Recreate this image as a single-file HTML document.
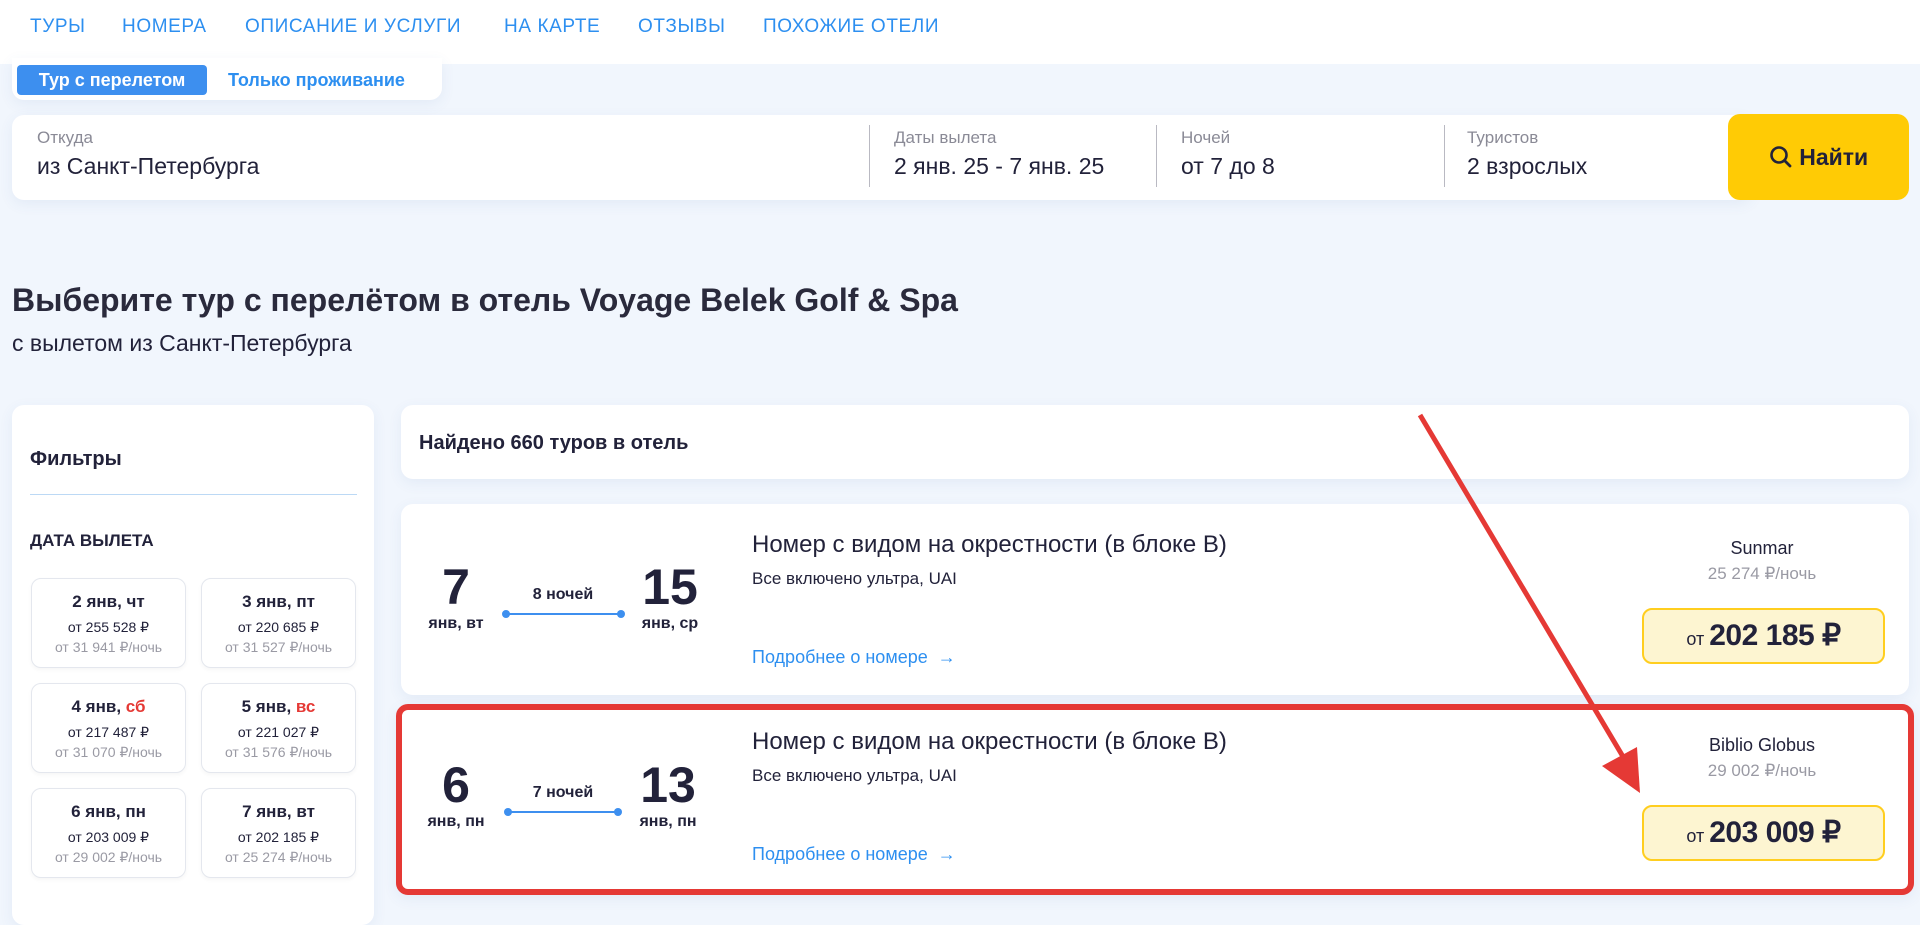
<!DOCTYPE html>
<html><head><meta charset="utf-8"><style>
*{box-sizing:border-box;margin:0;padding:0}
body{width:1920px;height:894px;overflow:hidden;background:#f1f6fd;font-family:"Liberation Sans",sans-serif;color:#22223a;position:relative}
.a{position:absolute;white-space:nowrap}
.hdr{position:absolute;left:0;top:0;width:1920px;height:64px;background:#fff}
.nav{top:16px;font-size:19px;color:#2d8ff0;letter-spacing:.6px}
.box{position:absolute;background:#fff;border-radius:12px;box-shadow:0 4px 14px rgba(60,100,160,.08)}
.lbl{font-size:17px;color:#8a8a96}
.val{font-size:23px;color:#22223a}
.div{position:absolute;width:1px;height:62px;top:125px;background:#b9b9c2}
.dc{position:absolute;width:155px;height:90px;border:1px solid #e4e7ee;border-radius:10px;background:#fff;text-align:center;box-shadow:0 2px 4px rgba(0,0,0,.04)}
.dc .t{position:absolute;left:0;right:0;top:13px;font-size:17px;color:#22223a;font-weight:600}
.dc .p{position:absolute;left:0;right:0;top:40px;font-size:14px;color:#22223a}
.dc .n{position:absolute;left:0;right:0;top:60px;font-size:14px;color:#9a9aa4}
.red{color:#e53935}
.big{font-size:50px;font-weight:bold;color:#22223a;text-align:center;width:80px}
.sm{font-size:16px;font-weight:bold;color:#22223a;text-align:center;width:90px}
.pbox{position:absolute;width:243px;height:56px;background:#fdf5d1;border:2px solid #ffce1f;border-radius:10px;text-align:center;line-height:52px;font-size:18px}
.pbox b{font-size:30px;letter-spacing:-.5px}
</style></head><body>
<div class="hdr"></div>
<div class="a nav" style="left:30px">ТУРЫ</div>
<div class="a nav" style="left:122px">НОМЕРА</div>
<div class="a nav" style="left:245px">ОПИСАНИЕ И УСЛУГИ</div>
<div class="a nav" style="left:504px">НА КАРТЕ</div>
<div class="a nav" style="left:638px">ОТЗЫВЫ</div>
<div class="a nav" style="left:763px">ПОХОЖИЕ ОТЕЛИ</div>

<div class="box" style="left:12px;top:58px;width:430px;height:42px;border-radius:0 0 12px 12px"></div>
<div class="a" style="left:17px;top:65px;width:190px;height:30px;background:#3d8fef;border-radius:4px;color:#fff;font-size:18px;font-weight:600;text-align:center;line-height:30px">Тур с перелетом</div>
<div class="a" style="left:228px;top:65px;line-height:30px;font-size:18px;font-weight:600;color:#2d8ff0">Только проживание</div>

<div class="box" style="left:12px;top:115px;width:1740px;height:85px"></div>
<div class="a lbl" style="left:37px;top:128px">Откуда</div>
<div class="a val" style="left:37px;top:153px">из Санкт-Петербурга</div>
<div class="div" style="left:869px"></div>
<div class="a lbl" style="left:894px;top:128px">Даты вылета</div>
<div class="a val" style="left:894px;top:153px">2 янв. 25 - 7 янв. 25</div>
<div class="div" style="left:1156px"></div>
<div class="a lbl" style="left:1181px;top:128px">Ночей</div>
<div class="a val" style="left:1181px;top:153px">от 7 до 8</div>
<div class="div" style="left:1444px"></div>
<div class="a lbl" style="left:1467px;top:128px">Туристов</div>
<div class="a val" style="left:1467px;top:153px">2 взрослых</div>
<div class="a" style="left:1728px;top:114px;width:181px;height:86px;background:#ffcb05;border-radius:12px;font-size:23px;font-weight:bold;color:#22223a;text-align:center;line-height:86px">
<svg width="24" height="24" viewBox="0 0 24 24" style="vertical-align:-4px"><circle cx="10" cy="10" r="7.5" fill="none" stroke="#22223a" stroke-width="2.6"/><path d="M15.5 15.5L21 21" stroke="#22223a" stroke-width="2.8" stroke-linecap="round"/></svg> Найти</div>

<div class="a" style="left:12px;top:282px;font-size:32px;font-weight:bold;color:#2a2a3c">Выберите тур с перелётом в отель Voyage Belek Golf &amp; Spa</div>
<div class="a" style="left:12px;top:330px;font-size:23px;color:#22223a">с вылетом из Санкт-Петербурга</div>

<div class="box" style="left:12px;top:405px;width:362px;height:520px"></div>
<div class="a" style="left:30px;top:448px;font-size:20px;font-weight:bold">Фильтры</div>
<div class="a" style="left:30px;top:494px;width:327px;height:1px;background:#bcd9f5"></div>
<div class="a" style="left:30px;top:531px;font-size:17px;font-weight:bold">ДАТА ВЫЛЕТА</div>
<div class="dc" style="left:31px;top:578px"><div class="t">2 янв, чт</div><div class="p">от 255 528 ₽</div><div class="n">от 31 941 ₽/ночь</div></div>
<div class="dc" style="left:201px;top:578px"><div class="t">3 янв, пт</div><div class="p">от 220 685 ₽</div><div class="n">от 31 527 ₽/ночь</div></div>
<div class="dc" style="left:31px;top:683px"><div class="t">4 янв, <span class="red">сб</span></div><div class="p">от 217 487 ₽</div><div class="n">от 31 070 ₽/ночь</div></div>
<div class="dc" style="left:201px;top:683px"><div class="t">5 янв, <span class="red">вс</span></div><div class="p">от 221 027 ₽</div><div class="n">от 31 576 ₽/ночь</div></div>
<div class="dc" style="left:31px;top:788px"><div class="t">6 янв, пн</div><div class="p">от 203 009 ₽</div><div class="n">от 29 002 ₽/ночь</div></div>
<div class="dc" style="left:201px;top:788px"><div class="t">7 янв, вт</div><div class="p">от 202 185 ₽</div><div class="n">от 25 274 ₽/ночь</div></div>

<div class="box" style="left:401px;top:405px;width:1508px;height:74px"></div>
<div class="a" style="left:419px;top:432px;font-size:20px"><b>Найдено 660 туров в отель</b></div>

<div class="box" style="left:401px;top:504px;width:1508px;height:191px"></div>
<div class="a big" style="left:416px;top:558px">7</div>
<div class="a sm" style="left:411px;top:615px">янв, вт</div>
<div class="a" style="left:523px;top:586px;font-size:16px;font-weight:bold;width:80px;text-align:center">8 ночей</div>
<div class="a" style="left:505px;top:613px;width:116px;height:2px;background:#3d8fef"></div>
<div class="a" style="left:502px;top:610px;width:8px;height:8px;border-radius:50%;background:#3d8fef"></div>
<div class="a" style="left:617px;top:610px;width:8px;height:8px;border-radius:50%;background:#3d8fef"></div>
<div class="a big" style="left:630px;top:558px">15</div>
<div class="a sm" style="left:625px;top:615px">янв, ср</div>
<div class="a" style="left:752px;top:531px;font-size:24px">Номер с видом на окрестности (в блоке B)</div>
<div class="a" style="left:752px;top:569px;font-size:17px">Все включено ультра, UAI</div>
<div class="a" style="left:752px;top:647px;font-size:18px;color:#2d8ff0">Подробнее о номере &nbsp;→</div>
<div class="a" style="left:1662px;top:538px;width:200px;text-align:center;font-size:18px">Sunmar</div>
<div class="a" style="left:1662px;top:564px;width:200px;text-align:center;font-size:17px;color:#9a9aa4">25 274 ₽/ночь</div>
<div class="pbox" style="left:1642px;top:608px">от <b>202 185 ₽</b></div>

<div class="box" style="left:396px;top:704px;width:1518px;height:191px;border:6px solid #e53935;border-radius:12px"></div>
<div class="a big" style="left:416px;top:756px">6</div>
<div class="a sm" style="left:411px;top:813px">янв, пн</div>
<div class="a" style="left:523px;top:784px;font-size:16px;font-weight:bold;width:80px;text-align:center">7 ночей</div>
<div class="a" style="left:507px;top:811px;width:112px;height:2px;background:#3d8fef"></div>
<div class="a" style="left:504px;top:808px;width:8px;height:8px;border-radius:50%;background:#3d8fef"></div>
<div class="a" style="left:614px;top:808px;width:8px;height:8px;border-radius:50%;background:#3d8fef"></div>
<div class="a big" style="left:628px;top:756px">13</div>
<div class="a sm" style="left:623px;top:813px">янв, пн</div>
<div class="a" style="left:752px;top:728px;font-size:24px">Номер с видом на окрестности (в блоке B)</div>
<div class="a" style="left:752px;top:766px;font-size:17px">Все включено ультра, UAI</div>
<div class="a" style="left:752px;top:844px;font-size:18px;color:#2d8ff0">Подробнее о номере &nbsp;→</div>
<div class="a" style="left:1662px;top:735px;width:200px;text-align:center;font-size:18px">Biblio Globus</div>
<div class="a" style="left:1662px;top:761px;width:200px;text-align:center;font-size:17px;color:#9a9aa4">29 002 ₽/ночь</div>
<div class="pbox" style="left:1642px;top:805px">от <b>203 009 ₽</b></div>

<svg class="a" style="left:0;top:0" width="1920" height="894"><path d="M1420 415L1625 760" stroke="#e53935" stroke-width="5" fill="none"/><path d="M1640 793L1602 766L1637 747Z" fill="#e53935"/></svg>
</body></html>
